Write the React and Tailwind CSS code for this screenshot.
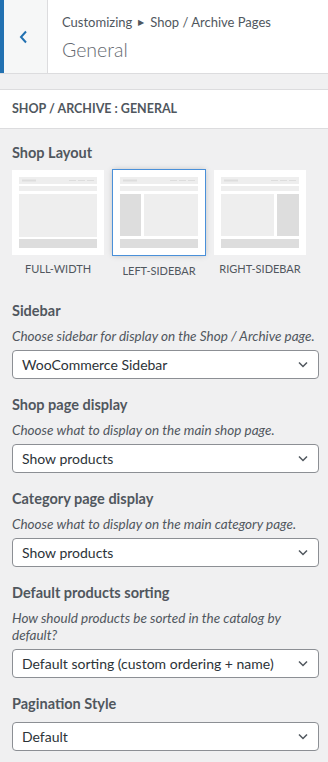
import React from "react";

const font = { fontFamily: 'Lato, "Noto Sans", sans-serif' };

const Thumb = ({ type }) => (
  <svg width="92" height="85" viewBox="0 0 92 85">
    <rect x="0" y="0" width="92" height="85" fill="#ffffff" />
    <rect x="7" y="7" width="78" height="7" fill="#eeeeee" />
    <rect x="10" y="9.5" width="14" height="2" fill="#dddddd" />
    <rect x="57" y="10" width="7" height="1" fill="#dddddd" />
    <rect x="66" y="10" width="7" height="1" fill="#dddddd" />
    <rect x="75" y="10" width="7" height="1" fill="#dddddd" />
    <rect x="7" y="16" width="78" height="5" fill="#eeeeee" />
    {type === "full" && <rect x="7" y="24" width="78" height="43" fill="#eeeeee" />}
    {type === "left" && (
      <>
        <rect x="7" y="24" width="21" height="42" fill="#dddddd" />
        <rect x="31" y="24" width="54" height="42" fill="#eeeeee" />
      </>
    )}
    {type === "right" && (
      <>
        <rect x="7" y="24" width="53" height="42" fill="#eeeeee" />
        <rect x="63" y="24" width="22" height="42" fill="#dddddd" />
      </>
    )}
    <rect x="7" y="69" width="78" height="9" fill="#dddddd" />
  </svg>
);

const Select = ({ value }) => (
  <div className="relative h-[29px] w-full rounded-[4px] border border-[#8c8f94] bg-white">
    <div className="flex h-full items-center pl-[9px] text-[14px] text-[#2c3338]">{value}</div>
    <svg
      className="absolute right-[10px] top-[10px]"
      width="10"
      height="7"
      viewBox="0 0 10 7"
      fill="none"
      stroke="#50575e"
      strokeWidth="1.5"
    >
      <path d="M1 1.5 L5 5.5 L9 1.5" />
    </svg>
  </div>
);

const Field = ({ title, desc, value, top = "mt-4" }) => (
  <div className={top}>
    <div className="text-[14.5px] font-bold leading-[20px] text-[#50575e]">{title}</div>
    {desc && (
      <div className="mt-[7px] text-[13.5px] italic leading-[17px] text-[#50575e]">{desc}</div>
    )}
    <div className={desc ? "mt-[5px]" : "mt-[8px]"}>
      <Select value={value} />
    </div>
  </div>
);

export default function App() {
  const layouts = [
    { type: "full", label: "FULL-WIDTH" },
    { type: "left", label: "LEFT-SIDEBAR", selected: true },
    { type: "right", label: "RIGHT-SIDEBAR" },
  ];

  return (
    <div className="min-h-[762px] w-[328px] bg-[#f0f0f1]" style={font}>
      <div className="flex h-[74px] border-b border-[#dcdcde] bg-white">
        <div className="w-[4px] bg-[#2271b1]" />
        <div className="flex w-[44px] items-center border-r border-[#dcdcde] bg-[#f6f7f7] pl-[15px]">
          <svg width="9" height="14" viewBox="0 0 9 14" fill="none" stroke="#2271b1" strokeWidth="2">
            <path d="M7 1.5 L2 7 L7 12.5" />
          </svg>
        </div>
        <div className="pl-[14px] pt-[12px]">
          <div className="flex items-center text-[13px] leading-[20px] text-[#50575e]">
            Customizing
            <span className="mx-[6px] text-[8px]">▶</span>
            Shop / Archive Pages
          </div>
          <div className="mt-[6px] text-[19.5px] font-light leading-[24px] text-[#646970]">General</div>
        </div>
      </div>

      <div className="mt-[15px] flex h-[40px] items-center border-y border-[#dcdcde] bg-white pl-3">
        <span className="text-[12.5px] font-bold text-[#50575e]">SHOP / ARCHIVE : GENERAL</span>
      </div>

      <div className="pl-3 pr-[9px] pt-[14px] pb-4">
        <div className="text-[14.5px] font-bold leading-[20px] text-[#50575e]">Shop Layout</div>
        <div className="mt-[7px] flex gap-[9px]">
          {layouts.map((l) => (
            <div key={l.type} className="flex w-[92px] flex-col items-center">
              <div
                className={
                  l.selected
                    ? "outline outline-1 outline-[#4a90d9] shadow-[0_0_6px_rgba(0,0,0,0.25)]"
                    : ""
                }
              >
                <Thumb type={l.type} />
              </div>
              <div
                className={`${l.selected ? "mt-[8px]" : "mt-[6px]"} whitespace-nowrap text-[11px] leading-[16px] text-[#50575e]`}
              >
                {l.label}
              </div>
            </div>
          ))}
        </div>

        <Field
          top="mt-[22px]"
          title="Sidebar"
          desc="Choose sidebar for display on the Shop / Archive page."
          value="WooCommerce Sidebar"
        />
        <Field
          title="Shop page display"
          desc="Choose what to display on the main shop page."
          value="Show products"
        />
        <Field
          title="Category page display"
          desc="Choose what to display on the main category page."
          value="Show products"
        />
        <Field
          title="Default products sorting"
          desc="How should products be sorted in the catalog by default?"
          value="Default sorting (custom ordering + name)"
        />
        <Field title="Pagination Style" value="Default" />
      </div>
    </div>
  );
}
